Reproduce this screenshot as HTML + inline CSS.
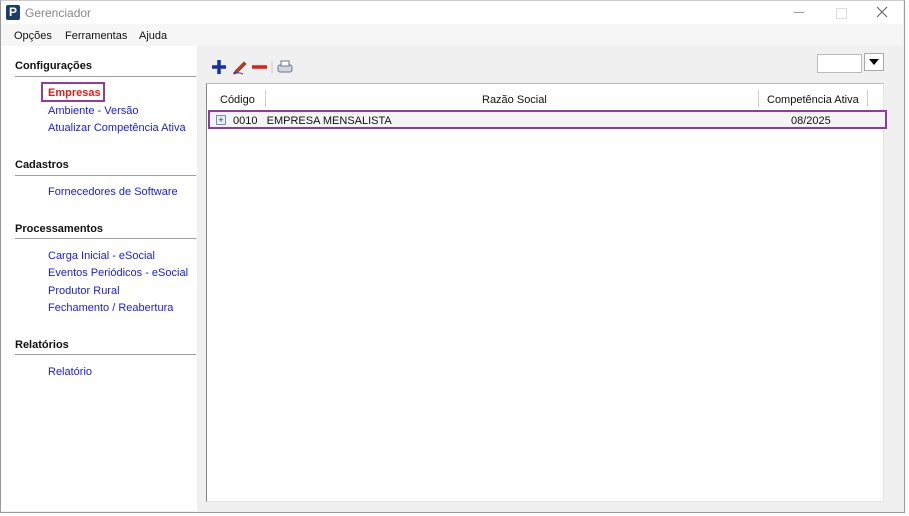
<!DOCTYPE html><html><head><style>
body{margin:0;width:909px;height:516px;background:#fff;font-family:"Liberation Sans",sans-serif;font-size:11px;position:relative;overflow:hidden}
.a{position:absolute}
.lnk{color:#1a1adf;left:48px}
.hd{left:15px;font-weight:bold;color:#111}
.ln{left:15px;width:181px;height:1px;background:#a0a0a0}
</style></head><body>
<div class="a" style="left:0;top:0;width:903px;height:511px;border:1px solid #9a9a9a;border-top-color:#ccc;background:#f0f0f0"></div>
<div class="a" style="left:1px;top:1px;width:902px;height:23px;background:#fff"></div>
<div class="a" style="left:6px;top:5px;width:14px;height:15px;background:#1d3f66;border-radius:2px;color:#fff;font-weight:bold;font-size:12px;line-height:15px;text-align:center">P</div>
<div class="a" style="left:25px;top:6px;color:#888;font-size:12px">Gerenciador</div>
<div class="a" style="left:794px;top:12px;width:10px;height:1px;background:#999"></div>
<div class="a" style="left:836px;top:8px;width:9px;height:9px;border:1px solid #ddd"></div>
<svg class="a" style="left:876px;top:6px" width="12" height="12"><path d="M1 1l10 10M11 1L1 11" stroke="#666" stroke-width="1.1"/></svg>
<div class="a" style="left:1px;top:24px;width:902px;height:22px;background:#f6f6f6"></div>
<div class="a" style="left:14px;top:30px;color:#111">Opções</div>
<div class="a" style="left:65px;top:30px;color:#111">Ferramentas</div>
<div class="a" style="left:139px;top:30px;color:#111">Ajuda</div>
<div class="a" style="left:1px;top:46px;width:196px;height:465px;background:#fff"></div>
<div class="a hd" style="top:60px">Configurações</div><div class="a ln" style="top:76px"></div>
<div class="a" style="left:41px;top:82px;width:64px;height:20px;border:2px solid #8b3f96;box-sizing:border-box"></div>
<div class="a" style="left:48px;top:87px;color:#d9201f;font-weight:bold">Empresas</div>
<div class="a lnk" style="top:105px">Ambiente - Versão</div>
<div class="a lnk" style="top:122px">Atualizar Competência Ativa</div>
<div class="a hd" style="top:159px">Cadastros</div><div class="a ln" style="top:175px"></div>
<div class="a lnk" style="top:186px">Fornecedores de Software</div>
<div class="a hd" style="top:223px">Processamentos</div><div class="a ln" style="top:238px"></div>
<div class="a lnk" style="top:250px">Carga Inicial - eSocial</div>
<div class="a lnk" style="top:267px">Eventos Periódicos - eSocial</div>
<div class="a lnk" style="top:285px">Produtor Rural</div>
<div class="a lnk" style="top:302px">Fechamento / Reabertura</div>
<div class="a hd" style="top:339px">Relatórios</div><div class="a ln" style="top:354px"></div>
<div class="a lnk" style="top:366px">Relatório</div>
<svg class="a" style="left:210px;top:58px" width="90" height="18">
<path d="M2 9h14M9 2v14" stroke="#1530a8" stroke-width="3.5"/>
<path d="M25 13l9-9 2 2-9 9-3 1z" fill="#c0392b" stroke="#7a4a1a" stroke-width="0.8"/><path d="M23 15c3 0 6-1 10 1" stroke="#2a3a9a" fill="none"/>
<path d="M42 9h15" stroke="#d9201f" stroke-width="3.5"/>
<path d="M62 3v13" stroke="#ccc"/>
<rect x="68" y="7" width="14" height="7" rx="2" fill="#cfd6de" stroke="#6b7a8a"/><rect x="71" y="3" width="8" height="5" fill="#fff" stroke="#6b7a8a"/>
</svg>
<div class="a" style="left:817px;top:54px;width:43px;height:17px;background:#fff;border:1px solid #bbb"></div>
<div class="a" style="left:864px;top:53px;width:20px;height:18px;background:#fff;border:1px solid #aaa;box-sizing:border-box"></div>
<div class="a" style="left:869px;top:59px;width:0;height:0;border-left:5px solid transparent;border-right:5px solid transparent;border-top:6px solid #000"></div>
<div class="a" style="left:206px;top:83px;width:676px;height:417px;background:#fff;border-left:1px solid #888;border-top:1px solid #bbb;border-right:1px solid #e4e4e4;border-bottom:1px solid #e4e4e4"></div>
<div class="a" style="left:220px;top:94px;color:#111">Código</div>
<div class="a" style="left:265px;top:90px;width:1px;height:17px;background:#ccc"></div>
<div class="a" style="left:482px;top:94px;color:#111">Razão Social</div>
<div class="a" style="left:758px;top:90px;width:1px;height:17px;background:#ccc"></div>
<div class="a" style="left:767px;top:94px;color:#111">Competência Ativa</div>
<div class="a" style="left:867px;top:90px;width:1px;height:17px;background:#ccc"></div>
<div class="a" style="left:208px;top:110px;width:679px;height:19px;border:2.5px solid #8b3f96;box-sizing:border-box;background:#f4f4f4"></div>
<div class="a" style="left:216px;top:115px;width:8px;height:8px;border:1px solid #7890b0;background:#e8eef6;font-size:9px;line-height:8px;text-align:center;color:#234">+</div>
<div class="a" style="left:233px;top:115px;color:#111">0010&nbsp;&nbsp; EMPRESA MENSALISTA</div>
<div class="a" style="left:791px;top:115px;color:#111">08/2025</div>
</body></html>
